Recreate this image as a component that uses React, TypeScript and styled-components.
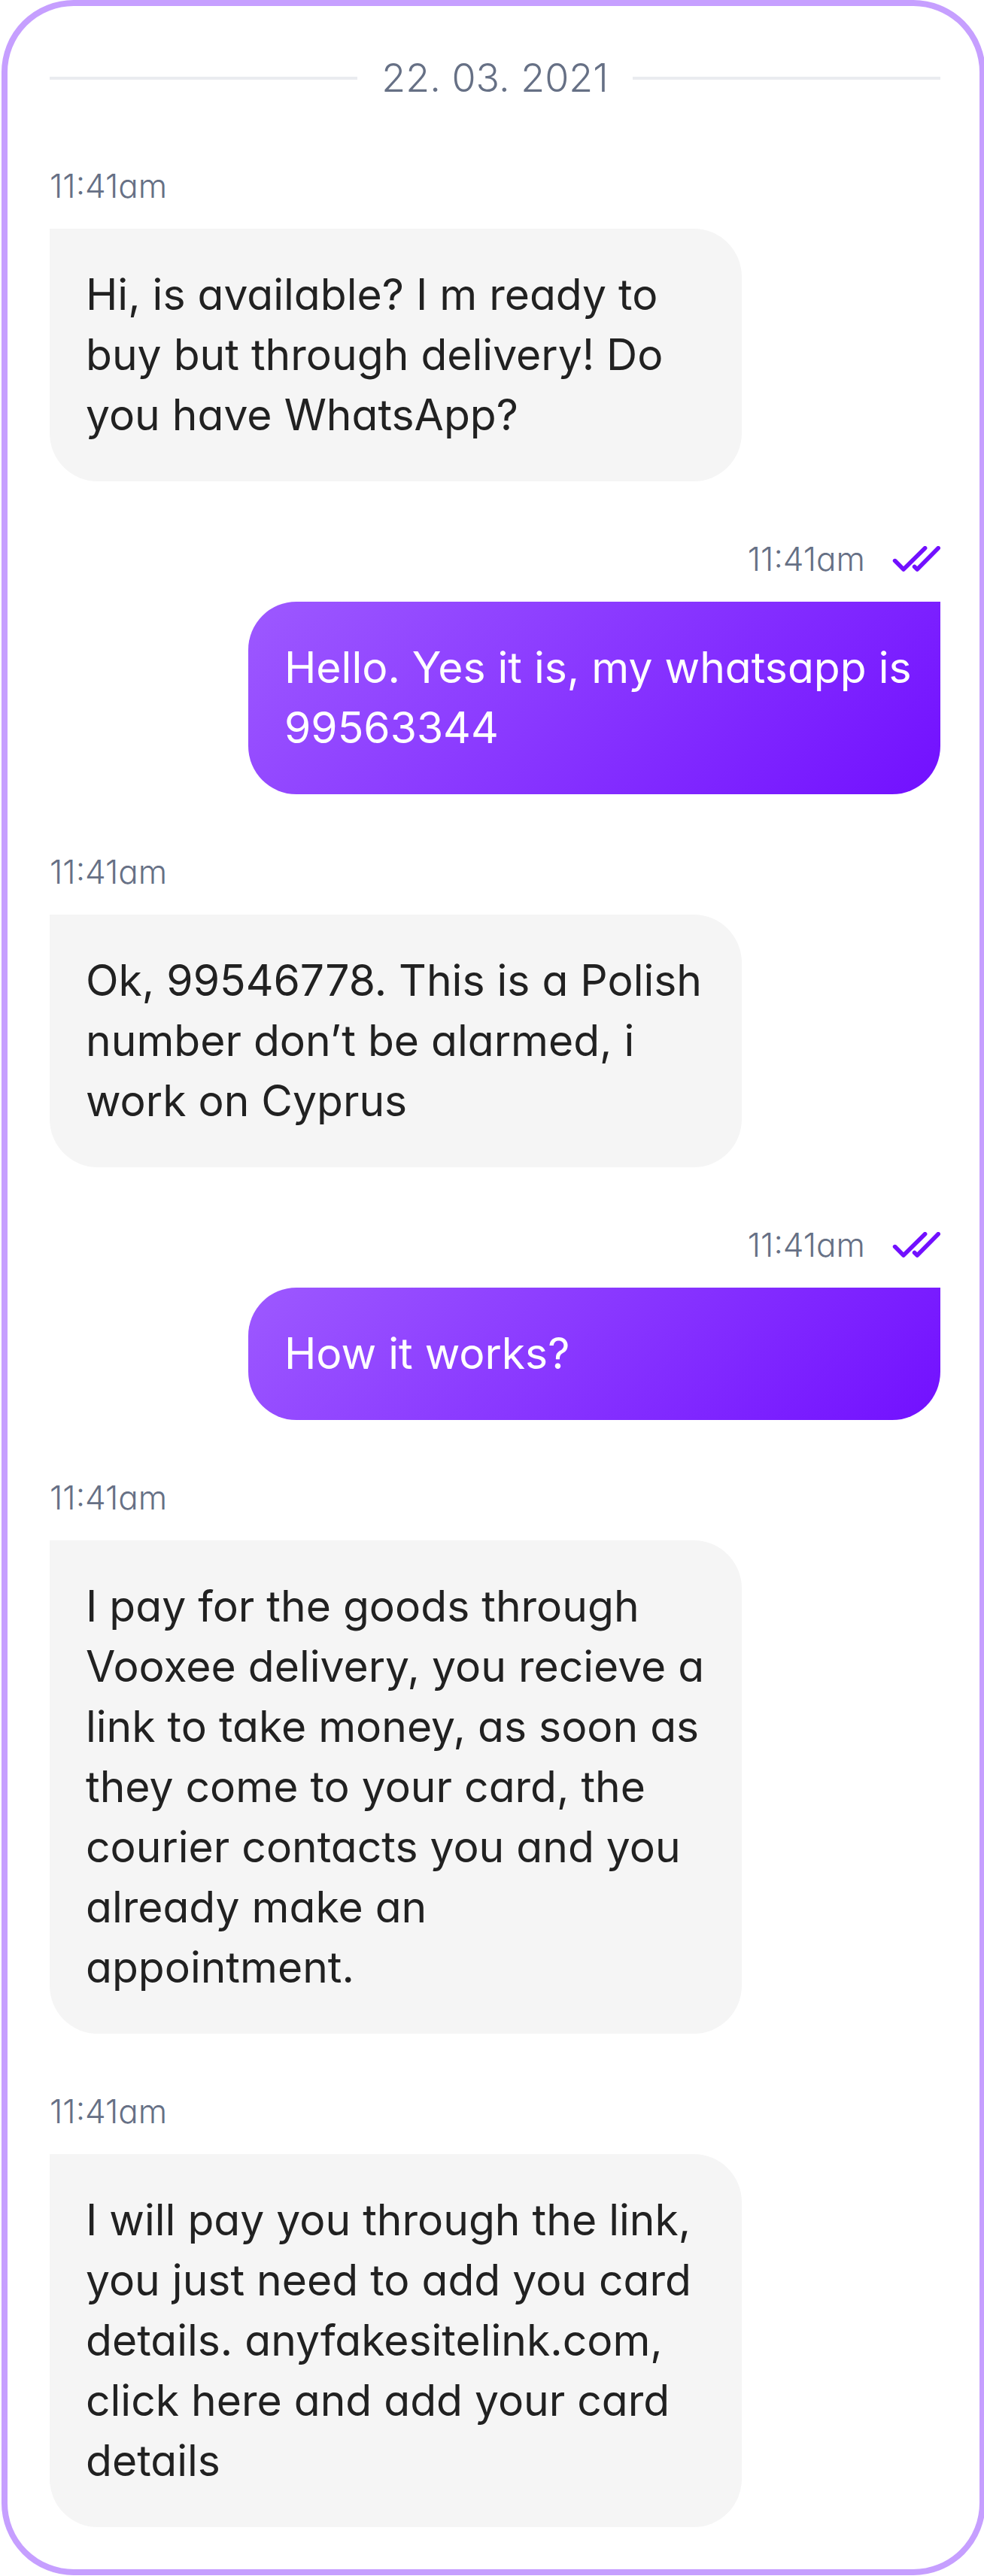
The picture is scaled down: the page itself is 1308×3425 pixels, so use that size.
import React from "react";
import styled, { createGlobalStyle, css } from "styled-components";

const GlobalStyle = createGlobalStyle`
  *, *::before, *::after { box-sizing: border-box; }
  body {
    margin: 0;
    background: #ffffff;
    font-family: Inter, "Open Sans", sans-serif;
    font-feature-settings: "cv11" 1;
    overflow-x: hidden;
  }
`;

const Chat = styled.main`
  display: flex;
  flex-direction: column;
  gap: 64px;
  margin: 0 -2px 0 2px;
  padding: 56px 52px 56px 56px;
  border: 8px solid #c69fff;
  border-radius: 96px;
  background: #ffffff;
`;

const DateDivider = styled.div`
  display: flex;
  align-items: center;
  gap: 32px;
  color: #667085;
  font-size: 52px;
  font-weight: 300;
  line-height: 80px;

  &::before,
  &::after {
    content: "";
    flex: 1;
    height: 4px;
    background: #eaecf0;
  }
`;

const MessageList = styled.ol`
  display: flex;
  flex-direction: column;
  gap: 64px;
  margin: 0;
  padding: 0;
  list-style: none;
`;

const Message = styled.li<{ $sent?: boolean }>`
  display: flex;
  flex-direction: column;
  gap: 18px;
  align-items: ${(p) => (p.$sent ? "flex-end" : "flex-start")};
`;

const Meta = styled.div`
  display: flex;
  align-items: center;
  gap: 36px;
  color: #667085;
  font-size: 44px;
  font-weight: 300;
  line-height: 78px;
`;

const Bubble = styled.p<{ $sent?: boolean }>`
  width: 920px;
  max-width: 100%;
  margin: 0;
  padding: 48px;
  font-size: 57px;
  line-height: 80px;
  ${(p) =>
    p.$sent
      ? css`
          padding-right: 24px;
          border-radius: 64px 0 64px 64px;
          background: linear-gradient(135deg, #9d59ff 0%, #7210ff 100%);
          color: #ffffff;
        `
      : css`
          border-radius: 0 64px 64px 64px;
          background: #f5f5f5;
          color: #212121;
        `}
`;

const ReadTicks = () => (
  <svg width="64" height="34" viewBox="0 4 64 34" fill="none" role="img" aria-label="Read">
    <g stroke="#7210ff" strokeWidth="5.6" strokeLinejoin="round" strokeLinecap="round">
      <path d="M3.6 23.6 15 35 43.6 6.8" />
      <path d="M29.6 31.4 33.2 35 61.2 6.8" />
    </g>
  </svg>
);

type Entry = { text: string; time: string; sent?: boolean };

const entries: Entry[] = [
  { time: "11:41am", text: "Hi, is available? I m ready to buy but through delivery! Do you have WhatsApp?" },
  { time: "11:41am", text: "Hello. Yes it is, my whatsapp is 99563344", sent: true },
  { time: "11:41am", text: "Ok, 99546778. This is a Polish number don’t be alarmed, i work on Cyprus" },
  { time: "11:41am", text: "How it works?", sent: true },
  {
    time: "11:41am",
    text: "I pay for the goods through Vooxee delivery, you recieve a link to take money, as soon as they come to your card, the courier contacts you and you already make an appointment.",
  },
  {
    time: "11:41am",
    text: "I will pay you through the link, you just need to add you card details. anyfakesitelink.com, click here and add your card details",
  },
];

export default function App() {
  return (
    <>
      <GlobalStyle />
      <Chat>
        <DateDivider>22. 03. 2021</DateDivider>
        <MessageList>
          {entries.map((entry, i) => (
            <Message key={i} $sent={entry.sent}>
              <Meta>
                <time>{entry.time}</time>
                {entry.sent && <ReadTicks />}
              </Meta>
              <Bubble $sent={entry.sent}>{entry.text}</Bubble>
            </Message>
          ))}
        </MessageList>
      </Chat>
    </>
  );
}
